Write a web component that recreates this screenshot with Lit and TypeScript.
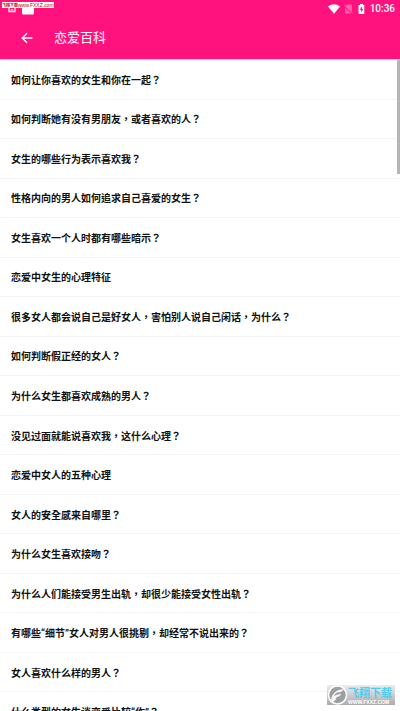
import { LitElement, html, css } from "lit";
import { customElement, property } from "lit/decorators.js";

const TOPICS = [
  "如何让你喜欢的女生和你在一起？",
  "如何判断她有没有男朋友，或者喜欢的人？",
  "女生的哪些行为表示喜欢我？",
  "性格内向的男人如何追求自己喜爱的女生？",
  "女生喜欢一个人时都有哪些暗示？",
  "恋爱中女生的心理特征",
  "很多女人都会说自己是好女人，害怕别人说自己闲话，为什么？",
  "如何判断假正经的女人？",
  "为什么女生都喜欢成熟的男人？",
  "没见过面就能说喜欢我，这什么心理？",
  "恋爱中女人的五种心理",
  "女人的安全感来自哪里？",
  "为什么女生喜欢接吻？",
  "为什么人们能接受男生出轨，却很少能接受女性出轨？",
  "有哪些“细节”女人对男人很挑剔，却经常不说出来的？",
  "女人喜欢什么样的男人？",
  "什么类型的女生谈恋爱比较“作”？",
];

@customElement("status-bar")
class StatusBar extends LitElement {
  static styles = css`
    :host {
      display: flex;
      align-items: center;
      justify-content: space-between;
      height: 17px;
      padding: 0 5px 0 8px;
      color: #fff;
      font: 500 10px/17px Roboto, sans-serif;
    }
    .group {
      display: flex;
      align-items: center;
    }
    .left {
      gap: 6px;
    }
    .wifi {
      margin-right: 4px;
    }
    .sim,
    .battery {
      margin-right: 5px;
    }
    svg {
      display: block;
    }
  `;
  render() {
    return html`
      <div class="group left">
        <svg width="8" height="14" viewBox="0 0 8 14">
          <path d="M1 5V9.500H7V5" fill="none" stroke="#ffd3e6" stroke-width="1.4" />
          <path d="M2 8.500l2-2 2 2z" fill="#ffd3e6" />
        </svg>
        <svg width="12" height="14" viewBox="0 0 12 14">
          <path d="M0 3H12V11Q12 12.500 10.500 12.500H1.500Q0 12.500 0 11Z" fill="#fff" />
        </svg>
      </div>
      <div class="group">
        <svg class="wifi" width="12" height="10" viewBox="0 0 12 10">
          <path d="M0 2.500Q6-1.800 12 2.500L6 9.800Z" fill="#fff" />
        </svg>
        <svg class="sim" width="9" height="10" viewBox="0 0 9 10">
          <path d="M3.500 0.500H8V8L1.500 2.300ZM1 3.500L7 9.500H1Z" fill="#ff62a6" />
          <path d="M0.500 0.800L8.700 9.500" stroke="#ff80b7" stroke-width="0.8" />
        </svg>
        <svg class="battery" width="7" height="10" viewBox="0 0 7 10">
          <path d="M2 0H5V1H6.300V10H0.500V1H2Z" fill="#fff" />
          <path d="M4 2.200L1.700 5.800H3.200V8.500L5.300 4.900H4Z" fill="#ff117e" />
        </svg>
        <span>10:36</span>
      </div>
    `;
  }
}

@customElement("top-bar")
class TopBar extends LitElement {
  @property() heading = "";
  static styles = css`
    :host {
      display: flex;
      align-items: center;
      gap: 14px;
      height: 42px;
      padding: 0 14px;
      color: #fff;
    }
    button {
      display: grid;
      place-items: center;
      width: 26px;
      height: 26px;
      padding: 0;
      border: 0;
      background: none;
      color: inherit;
      cursor: pointer;
    }
    h1 {
      margin: 0;
      font: 400 13px/20px Roboto, "Noto Sans CJK SC", sans-serif;
    }
  `;
  render() {
    return html`
      <button type="button" aria-label="返回">
        <svg width="12" height="12" viewBox="0 0 12 12">
          <path d="M11.500 6H1.500M6 1.200L1.200 6L6 10.800" fill="none" stroke="#fff" stroke-width="1.300" />
        </svg>
      </button>
      <h1>${this.heading}</h1>
    `;
  }
}

@customElement("topic-list")
class TopicList extends LitElement {
  @property({ attribute: false }) topics: string[] = [];
  static styles = css`
    :host {
      display: block;
      overflow-y: auto;
      scrollbar-width: none;
    }
    ul {
      display: grid;
      grid-auto-rows: minmax(39px, 1fr);
      box-sizing: border-box;
      min-height: calc(100% + 21px);
      margin: 0;
      padding: 0;
      list-style: none;
    }
    li {
      display: flex;
      border-bottom: 1px solid #f3f3f3;
    }
    a {
      flex: 1;
      display: flex;
      align-items: center;
      padding: 3px 11px 0;
      color: #111;
      text-decoration: none;
      font: 700 10px/16px Roboto, "Noto Sans CJK TC", sans-serif;
    }
  `;
  render() {
    return html`<ul>
      ${this.topics.map((t, i) => html`<li><a href="#topic-${i + 1}">${t}</a></li>`)}
    </ul>`;
  }
}

@customElement("site-stamp")
class SiteStamp extends LitElement {
  static styles = css`
    :host {
      display: flex;
      align-items: center;
      width: 68px;
      height: 20px;
      background: linear-gradient(#eceded, #a9acae);
    }
    svg {
      flex: none;
    }
    .words {
      display: flex;
      flex-direction: column;
      white-space: nowrap;
    }
    .name {
      color: #55cbea;
      font: 700 11px/14px "Noto Sans CJK SC", sans-serif;
    }
    .site {
      color: #fff;
      font: 700 5px/6px "Liberation Sans", sans-serif;
    }
  `;
  render() {
    return html`
      <svg width="21" height="20" viewBox="0 0 21 20">
        <circle cx="10.500" cy="10" r="9" fill="#9b9fa1" stroke="#fff" stroke-width="1.500" />
        <path
          d="M4 15.500Q5 5 17 4Q15 7.500 10 7.500Q7.500 9 7 11Q10 9 14.500 9Q13 12 9.500 12.300Q9 16 5.500 17Z"
          fill="#f5f5f5"
        />
      </svg>
      <div class="words">
        <span class="name">飞翔下载</span>
        <span class="site">WWW.FXXZ.COM</span>
      </div>
    `;
  }
}

@customElement("app-root")
class AppRoot extends LitElement {
  static styles = css`
    :host {
      position: relative;
      display: flex;
      flex-direction: column;
      height: 100vh;
      overflow: hidden;
      background: #fff;
    }
    header {
      flex: none;
      background: #ff117e;
      border-bottom: 1px solid #fbc6df;
    }
    .content {
      position: relative;
      flex: 1;
      min-height: 0;
      display: flex;
    }
    topic-list {
      flex: 1;
    }
    .thumb {
      position: absolute;
      top: 0;
      right: 0;
      width: 3px;
      height: 114px;
      background: #b5b5b5;
    }
    .banner {
      position: absolute;
      top: 2px;
      left: 2px;
      display: flex;
      background: #fff;
      color: #c00;
      font: 400 5px/6px "Liberation Sans", sans-serif;
      white-space: nowrap;
    }
    .banner span {
      font: 700 4px/6px "Noto Sans CJK SC", sans-serif;
    }
    site-stamp {
      position: absolute;
      right: 5px;
      bottom: 6px;
    }
  `;
  render() {
    return html`
      <header>
        <status-bar></status-bar>
        <top-bar heading="恋爱百科"></top-bar>
      </header>
      <div class="content">
        <topic-list .topics=${TOPICS}></topic-list>
        <div class="thumb"></div>
      </div>
      <div class="banner"><span>飞翔下载</span>www.FXXZ.com</div>
      <site-stamp></site-stamp>
    `;
  }
}
